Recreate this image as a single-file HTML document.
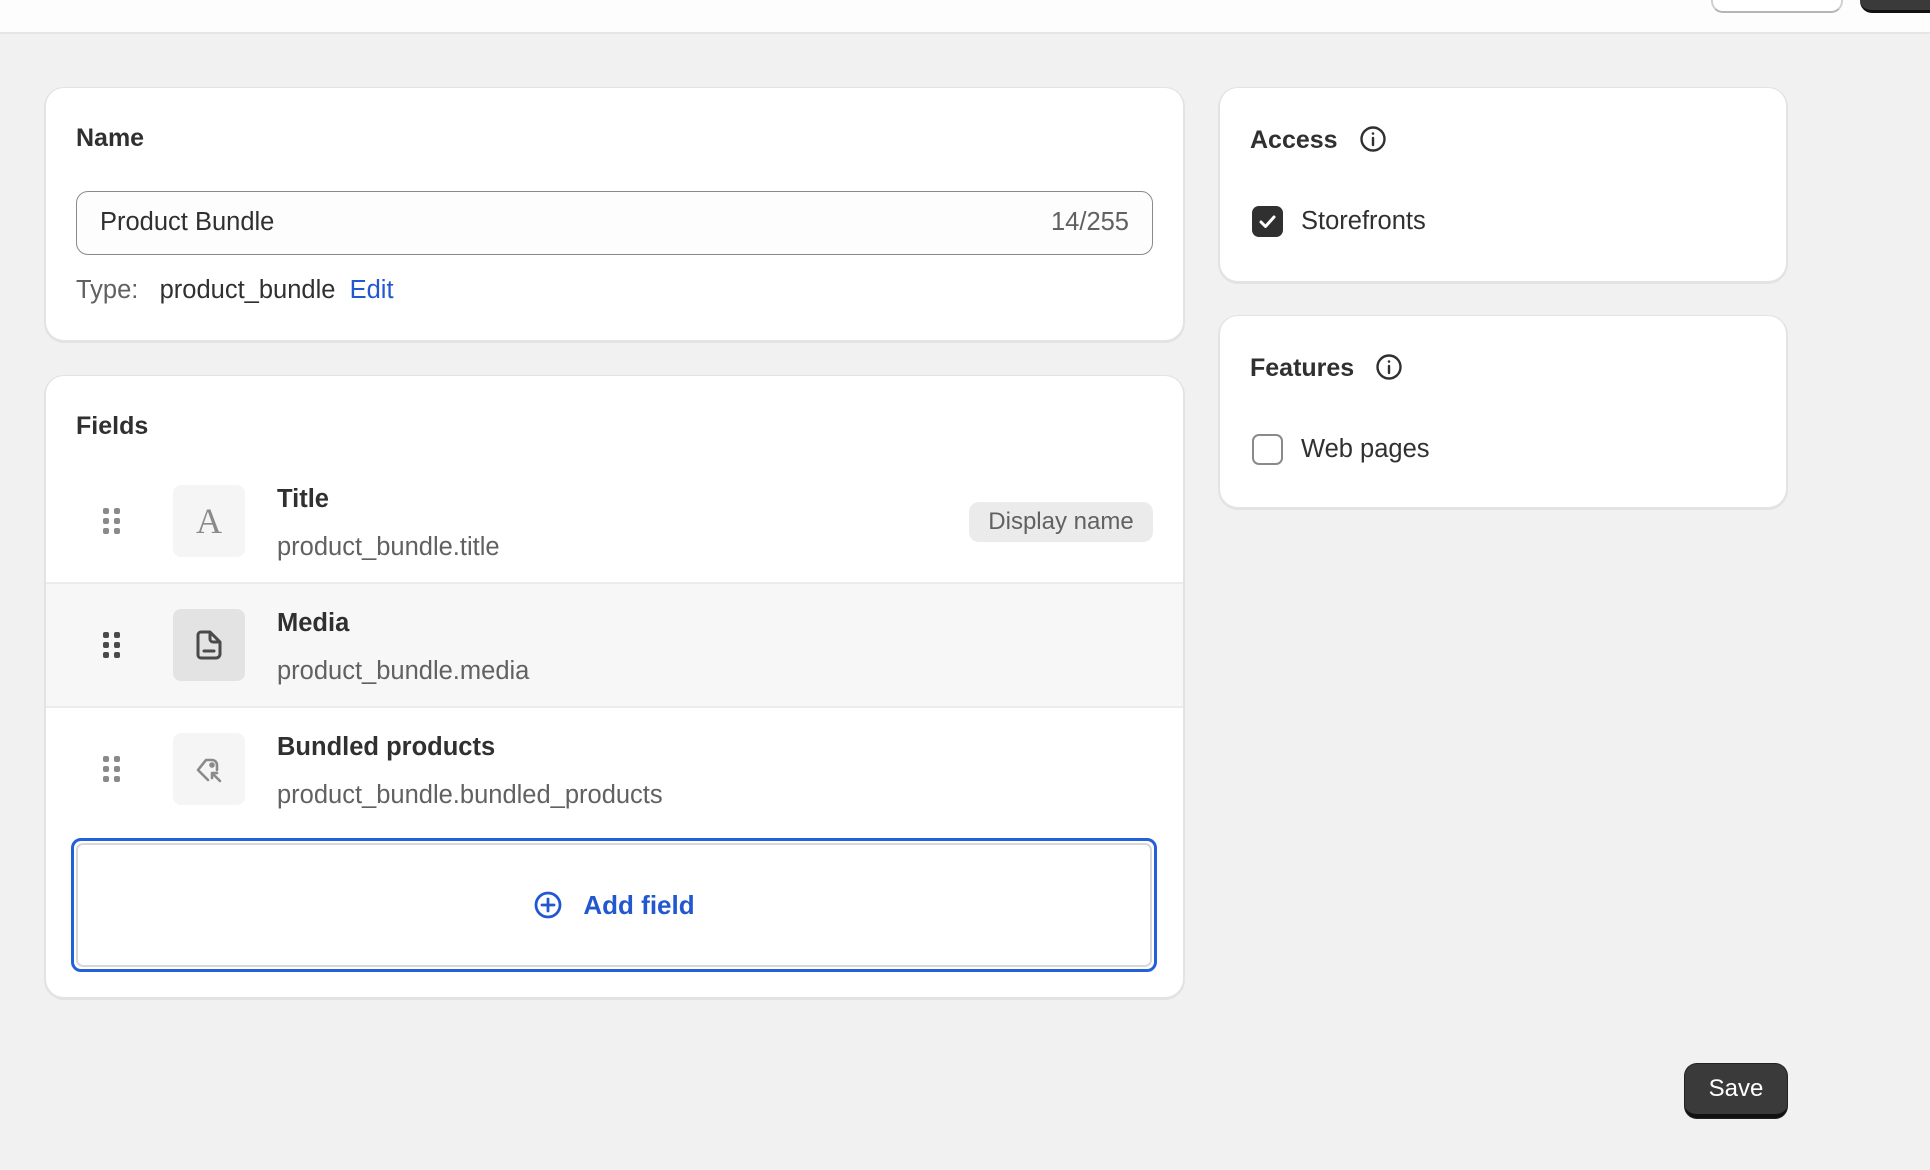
<!DOCTYPE html>
<html><head><meta charset="utf-8"><style>
*{box-sizing:border-box;margin:0;padding:0}
body{width:1930px;height:1170px;background:#f1f1f1;font-family:"Liberation Sans",sans-serif;color:#303030;position:relative;overflow:hidden;font-size:25.5px}
.top{position:absolute;left:0;top:0;width:1930px;height:34px;background:#fdfdfd;border-bottom:2px solid #e6e6e6}
.b1{position:absolute;left:1711px;top:-20px;width:132px;height:33px;background:#fff;border:2px solid #d0d0d0;border-radius:12px;border-bottom-color:#b5b5b5}
.b2{position:absolute;left:1860px;top:-20px;width:90px;height:33px;background:#3a3a3a;border-radius:12px;border-bottom:3px solid #111}
.card{position:absolute;background:#fff;border-radius:18px;box-shadow:0 1px 0 2px #e3e3e3,0 3px 0 0 #d4d4d4;overflow:hidden}
.abs{position:absolute}
.h{font-weight:bold;font-size:25px;color:#303030}
.input{position:absolute;left:30px;top:103px;width:1077px;height:64px;border:1.5px solid #8a8a8a;border-radius:12px;background:#fdfdfd}
.row{position:absolute;left:0;width:1138px;height:122px}
.ib{position:absolute;left:127px;top:25px;width:72px;height:72px;border-radius:8px;background:#f5f5f5;display:flex;align-items:center;justify-content:center}
.drag{position:absolute;left:56px;top:47px}
.t{position:absolute;left:231px;top:25px;font-weight:bold;font-size:25.5px}
.s{position:absolute;left:231px;top:73px;color:#616161;font-size:25.5px}
.cb{position:absolute;width:31px;height:31px;border-radius:7px}
</style></head><body>
<div class="top"></div><div class="b1"></div><div class="b2"></div>

<div class="card" style="left:46px;top:88px;width:1137px;height:252px">
 <div class="abs h" style="left:30px;top:36px">Name</div>
 <div class="input"><span class="abs" style="left:23px;top:16px">Product Bundle</span><span class="abs" style="right:23px;top:16px;color:#616161">14/255</span></div>
 <div class="abs" style="left:30px;top:188px"><span style="color:#616161">Type:</span>&nbsp;&nbsp; product_bundle &nbsp;<span style="color:#2158d0">Edit</span></div>
</div>

<div class="card" style="left:46px;top:376px;width:1137px;height:621px">
 <div class="abs h" style="left:30px;top:36px">Fields</div>
 <div class="row" style="top:84px">
  <svg class="drag" width="20" height="30" viewBox="0 0 20 30" fill="#8a8a8a"><rect x="1" y="1" width="6" height="6" rx="2"/><rect x="12" y="1" width="6" height="6" rx="2"/><rect x="1" y="11" width="6" height="6" rx="2"/><rect x="12" y="11" width="6" height="6" rx="2"/><rect x="1" y="21" width="6" height="6" rx="2"/><rect x="12" y="21" width="6" height="6" rx="2"/></svg>
  <div class="ib"><span style="font-family:'Liberation Serif',serif;font-size:36px;color:#8a8a8a">A</span></div>
  <div class="t">Title</div><div class="s">product_bundle.title</div>
  <div class="abs" style="left:923px;top:42px;width:184px;height:40px;background:#ebebeb;border-radius:10px;color:#616161;font-size:24px;text-align:center;line-height:40px">Display name</div>
 </div>
 <div class="row" style="top:206px;height:2px;background:#ebebeb"></div>
 <div class="row" style="top:208px;background:#f7f7f7">
  <svg class="drag" width="20" height="30" viewBox="0 0 20 30" fill="#4a4a4a"><rect x="1" y="1" width="6" height="6" rx="2"/><rect x="12" y="1" width="6" height="6" rx="2"/><rect x="1" y="11" width="6" height="6" rx="2"/><rect x="12" y="11" width="6" height="6" rx="2"/><rect x="1" y="21" width="6" height="6" rx="2"/><rect x="12" y="21" width="6" height="6" rx="2"/></svg>
  <div class="ib" style="background:#e3e3e3"><svg width="26" height="30" viewBox="0 0 26 30" fill="none" stroke="#4a4a4a" stroke-width="3" stroke-linejoin="round"><path d="M5 2h9l10 10v12a4 4 0 0 1-4 4H5a3 3 0 0 1-3-3V5a3 3 0 0 1 3-3z"/><path d="M14 2v7a3 3 0 0 0 3 3h7"/><path d="M8 21h10" stroke-linecap="round"/></svg></div>
  <div class="t">Media</div><div class="s">product_bundle.media</div>
 </div>
 <div class="row" style="top:330px;height:2px;background:#ebebeb"></div>
 <div class="row" style="top:332px">
  <svg class="drag" width="20" height="30" viewBox="0 0 20 30" fill="#8a8a8a"><rect x="1" y="1" width="6" height="6" rx="2"/><rect x="12" y="1" width="6" height="6" rx="2"/><rect x="1" y="11" width="6" height="6" rx="2"/><rect x="12" y="11" width="6" height="6" rx="2"/><rect x="1" y="21" width="6" height="6" rx="2"/><rect x="12" y="21" width="6" height="6" rx="2"/></svg>
  <div class="ib"><svg width="30" height="30" viewBox="0 0 30 30" fill="none" stroke="#8a8a8a" stroke-width="2.6" stroke-linecap="round" stroke-linejoin="round"><path d="M14 26l-10-10 8-10h6a5 5 0 0 1 5 5v5"/><circle cx="18" cy="11" r="1.5" fill="#8a8a8a"/><path d="M18 19l8 8M18 19h5M18 19v5"/></svg></div>
  <div class="t">Bundled products</div><div class="s">product_bundle.bundled_products</div>
 </div>
 <div class="abs" style="left:25px;top:462px;width:1086px;height:134px;border:3px solid #2460d8;border-radius:10px;padding:2px">
  <div style="width:100%;height:100%;border:2px solid #d8d8d8;border-radius:7px;display:flex;align-items:center;justify-content:center;color:#2158d0;font-weight:bold;font-size:26px">
   <svg width="30" height="30" viewBox="0 0 30 30" fill="none" stroke="#2158d0" stroke-width="2.8" stroke-linecap="round" style="margin-right:20px"><circle cx="15" cy="15" r="12"/><path d="M15 9v12M9 15h12"/></svg>Add field</div>
 </div>
</div>

<div class="card" style="left:1220px;top:88px;width:566px;height:193px">
 <div class="abs h" style="left:30px;top:37px">Access <svg width="28" height="28" viewBox="0 0 28 28" style="vertical-align:-5px;margin-left:14px" fill="none" stroke="#303030" stroke-width="2.4"><circle cx="14" cy="14" r="11.5"/><path d="M14 13v7" stroke-linecap="round"/><circle cx="14" cy="8.5" r="1.3" fill="#303030" stroke="none"/></svg></div>
 <div class="cb" style="left:32px;top:118px;background:#303030"><svg width="31" height="31" viewBox="0 0 31 31" fill="none" stroke="#fff" stroke-width="3" stroke-linecap="round" stroke-linejoin="round"><path d="M9 16l4.5 4.5L22 11"/></svg></div>
 <div class="abs" style="left:81px;top:119px">Storefronts</div>
</div>

<div class="card" style="left:1220px;top:316px;width:566px;height:191px">
 <div class="abs h" style="left:30px;top:37px">Features <svg width="28" height="28" viewBox="0 0 28 28" style="vertical-align:-5px;margin-left:14px" fill="none" stroke="#303030" stroke-width="2.4"><circle cx="14" cy="14" r="11.5"/><path d="M14 13v7" stroke-linecap="round"/><circle cx="14" cy="8.5" r="1.3" fill="#303030" stroke="none"/></svg></div>
 <div class="cb" style="left:32px;top:118px;border:2px solid #8a8a8a;background:#fff"></div>
 <div class="abs" style="left:81px;top:119px">Web pages</div>
</div>

<div class="abs" style="left:1685px;top:1064px;width:102px;height:54px;background:#3a3a3a;border-radius:12px;border-bottom:4px solid #111;box-shadow:0 0 0 1px #222;color:#fff;font-size:24px;text-align:center;line-height:50px">Save</div>
</body></html>
